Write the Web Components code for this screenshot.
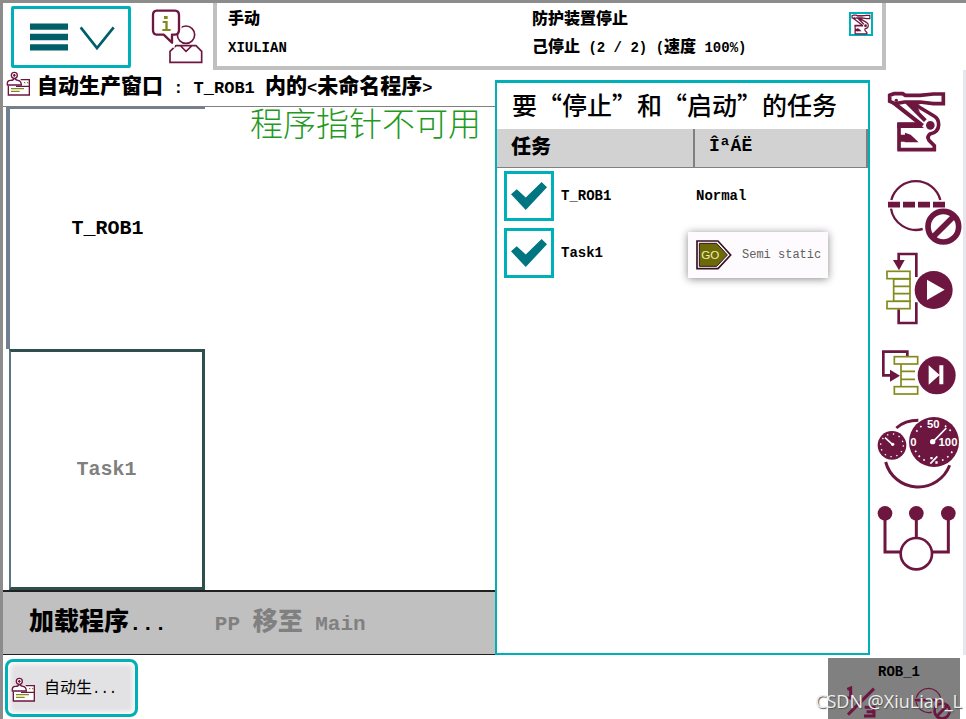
<!DOCTYPE html>
<html lang="zh-CN">
<head>
<meta charset="utf-8">
<meta name="viewport" content="width=device-width, initial-scale=1">
<title>自动生产窗口</title>
<style>
    body {
        margin: 0;
        --teal: #00b0b9;
        --mono: "Liberation Mono", "Noto Sans CJK SC", monospace;
        --cjk: "Noto Sans CJK SC", sans-serif;
        font-family: var(--mono);
        color: #000;
        background: #fff;
    }
</style>
</head>
<body>
<pendant-screen></pendant-screen>

<script>
"use strict"

// icons, drawn on a grid of three units per pixel
const icons = {
    robot: `
        <g fill="none" stroke="#6d1640" stroke-width="11">
            <path d="M82 134H150M87 130V170H112M87 211V180H114M82 209H198M193 214V197L177 181Q170 170 180 162 206 156 206 134 206 116 192 108L132 72"/>
            <path stroke-width="12" d="M70 68L158 137M112 68L166 122"/>
            <path d="M59 46L72 41H98L106 46H150L190 42H220V71H190L150 66H104L76 71 59 64Z" fill="#fff"/>
        </g>
        <path fill="#6d1640" d="M100 66H170L140 76 150 96ZM82 127H140L162 144H82ZM105 158L122 164 146 187H104ZM106 42H190L150 51H106Z"/>
        <circle cx="79" cy="61" r="5" fill="#6d1640"/>
        <circle cx="181" cy="136" r="15" fill="#6d1640" stroke="#fff" stroke-width="4"/>`,
    guard: `
        <g fill="none" stroke="#6d1640" stroke-width="7">
            <path d="M64 360A76 76 0 0 1 211 360M63 386A76 76 0 0 0 158 447"/>
            <path stroke-width="17" d="M54 374H90M99 374H135M144 374H180M189 374H225"/>
            <circle cx="220" cy="440" r="46" stroke-width="17"/>
            <path stroke-width="17" d="M186 474L253 407"/>
        </g>`,
    play: `
        <g fill="none" stroke="#6d1640" stroke-width="8">
            <path d="M86 50V27H139V96M86 193V234H139V172"/>
        </g>
        <path fill="#6d1640" d="M69 45H104L87 76Z"/>
        <g fill="#fff" stroke="#818a1a" stroke-width="5">
            <path d="M71 102H120V169H71ZM71 124H120M71 146H120"/>
            <rect x="51" y="79" width="69" height="22"/>
            <rect x="51" y="169" width="69" height="22"/>
        </g>
        <circle cx="191" cy="135" r="57" fill="#6d1640"/>
        <path fill="#fff" d="M171 104L224 134 171 165Z"/>`,
    step: `
        <path fill="none" stroke="#6d1640" stroke-width="8" d="M112 334V320H40V391H62"/>
        <path fill="#6d1640" d="M60 374V410L90 392Z"/>
        <g fill="none" stroke="#818a1a" stroke-width="5">
            <rect x="73" y="335" width="70" height="22"/>
            <rect x="73" y="425" width="70" height="22"/>
            <path d="M93 358V424M93 379H135M93 403H135"/>
        </g>
        <circle cx="200" cy="391" r="57" fill="#6d1640"/>
        <path fill="#fff" d="M176 361L208 389V361H220V418H208V391L176 419Z"/>`,
    speed: `
        <path fill="none" stroke="#6d1640" stroke-width="9" d="M79 69Q105 46 145 46M47 171A101 101 0 0 0 239 181"/>
        <circle cx="66" cy="121" r="43" fill="#6d1640"/>
        <circle cx="66" cy="121" r="34" fill="none" stroke="#fff" stroke-width="4" stroke-dasharray="4 14"/>
        <path stroke="#fff" stroke-width="5" d="M45 98L68 119"/>
        <circle cx="68" cy="118" r="5" fill="#fff"/>
        <circle cx="192" cy="111" r="75" fill="#6d1640"/>
        <path fill="none" stroke="#fff" stroke-width="5" stroke-dasharray="5 13" d="M136 137A61 61 0 0 0 165 166M216 166A61 61 0 0 0 248 137M139 80L155 62M225 62L245 80"/>
        <path stroke="#fff" stroke-width="5" d="M190 109L229 69M181 176L202 154"/>
        <circle cx="188" cy="110" r="8" fill="#fff"/>
        <path fill="#fff" d="M181 156H188V163H181ZM196 169H203V176H196Z"/>
        <g fill="#fff" font-family="Liberation Sans" font-weight="700" font-size="34" text-anchor="middle">
            <text x="190" y="68">50</text>
            <text x="130" y="122">0</text>
            <text x="234" y="122">100</text>
        </g>`,
    nodes: `
        <path fill="none" stroke="#6d1640" stroke-width="9" d="M45 325V441H94M139 325V400M235 325V441H184"/>
        <circle cx="45" cy="325" r="22" fill="#6d1640"/>
        <circle cx="139" cy="325" r="22" fill="#6d1640"/>
        <circle cx="235" cy="325" r="22" fill="#6d1640"/>
        <circle cx="139" cy="446" r="47" fill="#fff" stroke="#6d1640" stroke-width="8"/>`,
    operator: `
        <g fill="#fff" stroke="#6d1640" stroke-width="5">
            <circle cx="123" cy="92" r="26"/>
            <path d="M93 125H153L170 142V175H75V142ZM107 126L123 142 140 126"/>
            <path stroke="#fff" stroke-width="16" d="M90 92H81V116L56 92M102 40V80"/>
            <path stroke-width="7" stroke-linejoin="round" d="M35 20H90Q102 21 102 33V77Q102 91 90 92H81V116L56 92H35Q24 91 24 79V33Q24 21 35 20Z"/>
        </g>
        <path fill="#818a1a" d="M57 36H68V45H57ZM53 51H68V75H77V81H52V75H61V57H53Z"/>`,
    production: `
        <g fill="#fff" stroke="#6d1640" stroke-width="4">
            <path d="M7 44V72H70V26H44M30 46H70"/>
            <path d="M4 42Q2 28 14 28 24 28 24 20H26Q28 28 36 28 46 30 46 42Z"/>
            <circle cx="25" cy="13" r="9"/>
            <path d="M25 9V17M21 13H29"/>
        </g>
        <path fill="none" stroke="#818a1a" stroke-width="4" d="M15 53H54M15 61H41M54 35H58M63 35H67"/>`,
    menu: `
        <path fill="none" stroke="#005f69" stroke-width="19" d="M0 14H114M0 45H114M0 76H114"/>
        <path fill="none" stroke="#005f69" stroke-width="8" d="M152 16L201 78 251 16"/>`,
    go: `
        <path fill="#fff" stroke="#35101f" stroke-width="5" d="M3 3H66L104 45 66 86H3Z"/>
        <path fill="#6c6a08" stroke="#35101f" stroke-width="3" d="M10 10H62L94 45 62 79H10Z"/>
        <text x="43" y="57" fill="#f2efa8" font-family="Liberation Sans" font-size="35" text-anchor="middle">GO</text>`,
    ratio: `
        <path fill="none" stroke="#6d1640" stroke-width="9" d="M4 10L14 6V36M2 36H26M6 86L84 8M56 64H84V90H54M62 77H84"/>`
}

class Icon extends HTMLElement {
    constructor() {
        super()
        this.attachShadow({ mode: "open" })
    }
    connectedCallback() {
        const box = this.getAttribute("box")
        const [, , w, h] = box.split(" ")
        const scale = Number(this.getAttribute("scale") || 3)
        this.shadowRoot.innerHTML = `
            <style>
                :host{ display: block; flex: none; }
                svg{ display: block; }
            </style>
            <svg viewBox="${box}" width="${Math.round(w / scale)}" height="${Math.round(h / scale)}" aria-hidden="true">
                ${icons[this.getAttribute("name")]}
            </svg>
        `
    }
}

class StatusBar extends HTMLElement {
    constructor() {
        super()
        this.attachShadow({ mode: "open" }).innerHTML = `
            <style>
                :host{ display: flex; height: 67px; }
                .menu{
                    width: 120px;
                    height: 62px;
                    margin: 3px 14px 0 8px;
                    padding: 0 0 0 16px;
                    border: 3px solid var(--teal);
                    border-radius: 2px;
                    background: #fff;
                }
                .user{ border: 0; padding: 0; background: none; width: 68px; }
                .state{
                    flex: 1;
                    display: grid;
                    grid-template-columns: 304px 1fr auto;
                    box-sizing: border-box;
                    margin-right: 80px;
                    padding: 3px 9px 0 11px;
                    border: solid #c0c0c0;
                    border-width: 0 4px 4px;
                    font-size: 14px;
                    font-weight: 700;
                }
                p{ margin: 0; line-height: 28px; height: 28px; white-space: pre; }
                b{ font-size: 16px; }
                .badge{
                    display: grid;
                    place-items: center;
                    box-sizing: border-box;
                    width: 24px;
                    height: 24px;
                    margin-top: 6px;
                    border: 2px solid var(--teal);
                }
            </style>
            <button class="menu" aria-label="菜单"><c-icon name="menu" box="0 0 255 90"></c-icon></button>
            <button class="user" aria-label="操作员"><c-icon name="operator" box="0 0 186 195"></c-icon></button>
            <div class="state">
                <div><p><b>手动</b></p><p>XIULIAN</p></div>
                <div><p><b>防护装置停止</b></p><p><b>己停止</b> (2 / 2) (<b>速度</b> 100%)</p></div>
                <div class="badge"><c-icon name="robot" box="50 30 180 190" scale="9"></c-icon></div>
            </div>
        `
    }
}

class TaskTile extends HTMLElement {
    constructor() {
        super()
        this.attachShadow({ mode: "open" }).innerHTML = `
            <style>
                :host{ display: flex; flex: 1; }
                button{
                    flex: 1;
                    padding: 0;
                    border: solid #2f4f4f;
                    border-width: 3px 3px 3px 2px;
                    border-left-color: #5a7480;
                    background: #fff;
                    font: 700 20px var(--mono);
                    color: #808080;
                }
                :host([active]) button{
                    border-width: 2px 0 0 4px;
                    border-color: #708090;
                    color: #000;
                }
                :host([active]){ margin-left: -3px; }
            </style>
            <button><slot></slot></button>
        `
    }
}

class ProductionWindow extends HTMLElement {
    constructor() {
        super()
        this.attachShadow({ mode: "open" }).innerHTML = `
            <style>
                :host{ display: flex; flex-direction: column; min-width: 0; }
                h1{
                    display: flex;
                    align-items: flex-start;
                    gap: 6px;
                    margin: 0;
                    padding: 1px 0 0 3px;
                    height: 35px;
                    border-bottom: 1px solid #808080;
                    font-size: 17px;
                    line-height: 34px;
                }
                h1 span{ white-space: pre; }
                h1 b{ font-size: 21px; }
                .area{ flex: 1; display: flex; }
                .tasks{ display: flex; flex-direction: column; width: 196px; margin-left: 6px; }
                .message{
                    flex: 1;
                    margin: 0;
                    text-align: right;
                    padding-right: 14px;
                    font: 300 33px/30px var(--cjk);
                    color: #1f9a1f;
                }
                .bar{
                    display: flex;
                    gap: 48px;
                    height: 65px;
                    padding: 0 0 8px 26px;
                    box-sizing: border-box;
                    border: solid #202020;
                    border-width: 2px 0 1px;
                    background: #c0c0c0;
                }
                .bar button{
                    border: 0;
                    padding: 0;
                    background: none;
                    color: #000;
                    font: 700 21px var(--mono);
                    white-space: pre;
                }
                .bar b{ font-size: 25px; }
                .bar button:disabled{ color: #808080; }
            </style>
            <h1><c-icon name="production" box="0 0 75 78"></c-icon><span><b>自动生产窗口</b> : T_ROB1 <b>内的</b>&lt;<b>未命名程序</b>&gt;</span></h1>
            <div class="area">
                <div class="tasks"><slot></slot></div>
                <p class="message">程序指针不可用</p>
            </div>
            <div class="bar">
                <button><b>加载程序</b>...</button>
                <button disabled>PP <b>移至</b> Main</button>
            </div>
        `
    }
}

class TaskRow extends HTMLElement {
    constructor() {
        super()
        this.attachShadow({ mode: "open" }).innerHTML = `
            <style>
                :host{ display: block; }
                label{ display: flex; align-items: center; gap: 7px; padding-left: 7px; }
                input{
                    appearance: none;
                    display: grid;
                    place-items: center;
                    box-sizing: border-box;
                    flex: none;
                    width: 50px;
                    height: 50px;
                    margin: 0;
                    border: 3px solid var(--teal);
                    background: #fff;
                }
                input:checked::before{
                    content: "";
                    width: 36px;
                    height: 28px;
                    background: #007682;
                    clip-path: polygon(0 44%, 16% 26%, 41% 55%, 85% 0, 100% 19%, 41% 100%);
                }
            </style>
            <label><input type="checkbox" checked><slot></slot></label>
        `
    }
}

class TaskDialog extends HTMLElement {
    constructor() {
        super()
        this.attachShadow({ mode: "open" }).innerHTML = `
            <style>
                :host{
                    display: block;
                    margin-top: 10px;
                    box-sizing: border-box;
                    border: 2px solid var(--teal);
                    border-top-width: 3px;
                    background: #fff;
                }
                h2{
                    margin: 0;
                    padding: 0 0 4px 15px;
                    font: 500 25px/42px var(--cjk);
                    white-space: nowrap;
                }
                table{ width: 100%; border-collapse: collapse; table-layout: fixed; }
                th{
                    height: 38px;
                    box-sizing: border-box;
                    padding: 0 0 4px 14px;
                    border: solid #808080;
                    border-width: 0 2px 1px 0;
                    background: #d2d2d2;
                    text-align: left;
                    font-size: 18px;
                }
                th:first-child{ width: 197px; }
                th b{ font-size: 20px; }
                td{ height: 57px; padding: 0; font-size: 14px; font-weight: 700; }
                .plain{ padding-left: 2px; }
                .card{
                    display: flex;
                    align-items: center;
                    gap: 10px;
                    width: 140px;
                    height: 46px;
                    margin: 4px 0 0 -6px;
                    padding-left: 8px;
                    box-sizing: border-box;
                    background: #fdfbfd;
                    box-shadow: 0 1px 8px #0007;
                    color: #606060;
                    font-size: 12px;
                    font-weight: 400;
                    white-space: nowrap;
                }
            </style>
            <h2>要“停止”和“启动”的任务</h2>
            <table>
                <thead><tr><th><b>任务</b></th><th>ÎªÁË</th></tr></thead>
                <tbody>
                    <tr><td><task-row>T_ROB1</task-row></td><td class="plain">Normal</td></tr>
                    <tr><td><task-row>Task1</task-row></td><td><div class="card"><c-icon name="go" box="0 0 108 90"></c-icon>Semi static</div></td></tr>
                </tbody>
            </table>
        `
    }
}

class QuickBar extends HTMLElement {
    constructor() {
        super()
        this.attachShadow({ mode: "open" }).innerHTML = `
            <style>
                :host{
                    display: flex;
                    flex-direction: column;
                    padding-top: 10px;
                    box-sizing: border-box;
                    border-right: 3px solid #e6e6ee;
                    overflow: hidden;
                }
                button{ display: block; padding: 0; border: 0; background: none; }
            </style>
            <button aria-label="机械单元"><c-icon name="robot" box="0 0 288 270"></c-icon></button>
            <button aria-label="增量"><c-icon name="guard" box="0 270 288 240"></c-icon></button>
            <button aria-label="运行模式"><c-icon name="play" box="0 15 288 255"></c-icon></button>
            <button aria-label="步进模式"><c-icon name="step" box="0 270 288 225"></c-icon></button>
            <button aria-label="速度"><c-icon name="speed" box="0 15 288 255"></c-icon></button>
            <button aria-label="任务"><c-icon name="nodes" box="0 270 288 255"></c-icon></button>
        `
    }
}

class TaskBar extends HTMLElement {
    constructor() {
        super()
        this.attachShadow({ mode: "open" }).innerHTML = `
            <style>
                :host{
                    position: relative;
                    display: flex;
                    justify-content: space-between;
                    height: 64px;
                }
                .app{
                    display: flex;
                    align-items: center;
                    gap: 8px;
                    width: 133px;
                    height: 58px;
                    margin: 4px 0 0 2px;
                    padding: 0 0 4px 3px;
                    border: 3px solid var(--teal);
                    border-radius: 8px;
                    background: #e2e2e4;
                    box-shadow: inset 0 0 5px 2px #fff;
                    font: 14px var(--mono);
                    color: #000;
                }
                .app b{ font-weight: 400; font-size: 16px; }
                .app c-icon{ margin-top: 8px; }
                .unit{
                    display: flex;
                    flex-wrap: wrap;
                    justify-content: space-between;
                    width: 132px;
                    height: 61px;
                    margin: 3px 6px 0 0;
                    padding: 0 8px 0 18px;
                    border: 0;
                    background: #808080;
                    overflow: hidden;
                    color: #000;
                    font: 700 14px/28px var(--mono);
                }
                .unit span{ width: 100%; }
                .mark{
                    position: absolute;
                    right: 4px;
                    bottom: 8px;
                    font: 18px/20px "Open Sans", sans-serif;
                    color: #eee;
                    text-shadow: 1px 1px 1px #555;
                    white-space: nowrap;
                }
            </style>
            <button class="app"><c-icon name="production" box="0 0 75 78"></c-icon><span><b>自动生</b>...</span></button>
            <button class="unit">
                <span>ROB_1</span>
                <c-icon name="ratio" box="0 0 90 96"></c-icon>
                <c-icon name="guard" box="50 290 230 210" scale="6"></c-icon>
            </button>
            <div class="mark">CSDN @XiuLian_L</div>
        `
    }
}

class PendantScreen extends HTMLElement {
    constructor() {
        super()
        this.attachShadow({ mode: "open" }).innerHTML = `
            <style>
                :host{
                    display: flex;
                    flex-direction: column;
                    box-sizing: border-box;
                    min-height: 100vh;
                    border: solid #8c8c8c;
                    border-width: 3px 0 0 3px;
                }
                main{
                    flex: 1;
                    display: grid;
                    grid-template-columns: minmax(0, 1fr) 375px 96px;
                }
            </style>
            <status-bar></status-bar>
            <main>
                <production-window>
                    <task-tile active>T_ROB1</task-tile>
                    <task-tile>Task1</task-tile>
                </production-window>
                <task-dialog></task-dialog>
                <quick-bar></quick-bar>
            </main>
            <task-bar></task-bar>
        `
    }
}

customElements.define("c-icon", Icon)
customElements.define("status-bar", StatusBar)
customElements.define("task-tile", TaskTile)
customElements.define("production-window", ProductionWindow)
customElements.define("task-row", TaskRow)
customElements.define("task-dialog", TaskDialog)
customElements.define("quick-bar", QuickBar)
customElements.define("task-bar", TaskBar)
customElements.define("pendant-screen", PendantScreen)
</script>
</body>
</html>
